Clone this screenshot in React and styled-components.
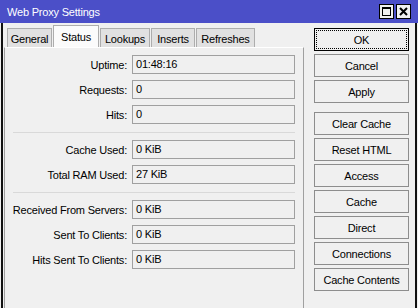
import React from 'react'
import styled, { createGlobalStyle } from 'styled-components'

const Global = createGlobalStyle`
  html, body {
    margin: 0;
    padding: 0;
    background: #f0f0f0;
  }
  body {
    font-family: "Liberation Sans", Arial, sans-serif;
    font-size: 11px;
    letter-spacing: -0.2px;
    color: #000;
  }
  * { box-sizing: border-box; }
`;

const Window = styled.div`
  width: 418px;
  height: 308px;
  overflow: hidden;
  display: flex;
  flex-direction: column;
  background: #f0f0f0;
`;

const TitleBar = styled.div`
  height: 23px;
  flex: none;
  display: flex;
  align-items: center;
  padding: 0 7px 0 7px;
  background: #4b4fc8;
  color: #fff;
`;

const TitleText = styled.div`
  flex: 1;
  padding-top: 1px;
`;

const WinButton = styled.div`
  width: 15px;
  height: 15px;
  margin-left: 2px;
  border: 1px solid #000;
  background: #f0f0f0;
  display: flex;
  align-items: center;
  justify-content: center;
`;

const Body = styled.div`
  flex: 1;
  display: flex;
  margin: 0 1px;
  border-left: 2px solid #111;
  border-right: 2px solid #111;
  padding-top: 2px;
`;

const LeftSide = styled.div`
  width: 300px;
  margin-left: 1px;
  display: flex;
  flex-direction: column;
`;

const TabBar = styled.div`
  height: 22px;
  flex: none;
  display: flex;
  align-items: flex-end;
  padding-left: 3px;
`;

const Tab = styled.div`
  width: ${p => p.$w}px;
  height: ${p => (p.$active ? 22 : 19)}px;
  margin-right: 1px;
  border: 1px solid #adadad;
  border-bottom: none;
  background: ${p => (p.$active ? '#fbfbfb' : '#e1e1e1')};
  display: flex;
  align-items: center;
  justify-content: center;
  padding-top: ${p => (p.$active ? 0 : 1)}px;
`;

const Panel = styled.div`
  flex: 1;
  border-left: 1px solid #a0a0a0;
  border-right: 1px solid #a0a0a0;
  border-top: 1px solid #fff;
  padding-top: 7px;
`;

const Form = styled.div`
  display: grid;
  grid-template-columns: 122px 163px;
  column-gap: 5px;
  row-gap: 6px;
  align-items: center;
`;

const Label = styled.div`
  text-align: right;
  white-space: nowrap;
`;

const Field = styled.div`
  height: 19px;
  line-height: 17px;
  padding-left: 3px;
  border: 1px solid #a0a0a0;
  background: #f0f0f0;
`;

const Separator = styled.div`
  width: 282px;
  height: 1px;
  margin: 8px 0 7px 8px;
  background: #d9d9d9;
`;

const ButtonColumn = styled.div`
  display: flex;
  flex-direction: column;
  gap: 3px;
  padding: 3px 5px 0 10px;
`;

const Button = styled.div`
  width: 95px;
  height: 23px;
  margin-top: ${p => (p.$spaced ? 6 : 0)}px;
  border: 1px solid ${p => (p.$default ? '#000' : '#8d8d8d')};
  outline: ${p => (p.$default ? '1px dotted #000' : 'none')};
  outline-offset: -3px;
  background: #f0f0f0;
  display: flex;
  align-items: center;
  justify-content: center;
`;

const sections = [
  [
    ['Uptime', '01:48:16'],
    ['Requests', '0'],
    ['Hits', '0'],
  ],
  [
    ['Cache Used', '0 KiB'],
    ['Total RAM Used', '27 KiB'],
  ],
  [
    ['Received From Servers', '0 KiB'],
    ['Sent To Clients', '0 KiB'],
    ['Hits Sent To Clients', '0 KiB'],
  ],
];

const tabs = [
  ['General', 45],
  ['Status', 46],
  ['Lookups', 50],
  ['Inserts', 44],
  ['Refreshes', 59],
];

const buttons = ['OK', 'Cancel', 'Apply', 'Clear Cache', 'Reset HTML', 'Access', 'Cache', 'Direct', 'Connections', 'Cache Contents'];

const App = () => {
  return (
    <Window>
      <Global />
      <TitleBar>
        <TitleText>Web Proxy Settings</TitleText>
        <WinButton>
          <svg width="9" height="9" viewBox="0 0 9 9">
            <rect x="0.5" y="0.5" width="8" height="8" fill="none" stroke="#000" />
            <rect x="0" y="0" width="9" height="2" fill="#000" />
          </svg>
        </WinButton>
        <WinButton>
          <svg width="9" height="9" viewBox="0 0 9 9">
            <path d="M1 1 L8 8 M8 1 L1 8" stroke="#000" strokeWidth="2" />
          </svg>
        </WinButton>
      </TitleBar>
      <Body>
        <LeftSide>
          <TabBar>
            {tabs.map(([name, w]) => (
              <Tab key={name} $w={w} $active={name === 'Status'}>{name}</Tab>
            ))}
          </TabBar>
          <Panel>
            {sections.map((rows, i) => (
              <React.Fragment key={i}>
                {i > 0 && <Separator />}
                <Form>
                  {rows.map(([label, value]) => (
                    <React.Fragment key={label}>
                      <Label>{label}:</Label>
                      <Field>{value}</Field>
                    </React.Fragment>
                  ))}
                </Form>
              </React.Fragment>
            ))}
          </Panel>
        </LeftSide>
        <ButtonColumn>
          {buttons.map(b => (
            <Button key={b} $default={b === 'OK'} $spaced={b === 'Clear Cache'}>{b}</Button>
          ))}
        </ButtonColumn>
      </Body>
    </Window>
  )
}

export default App
